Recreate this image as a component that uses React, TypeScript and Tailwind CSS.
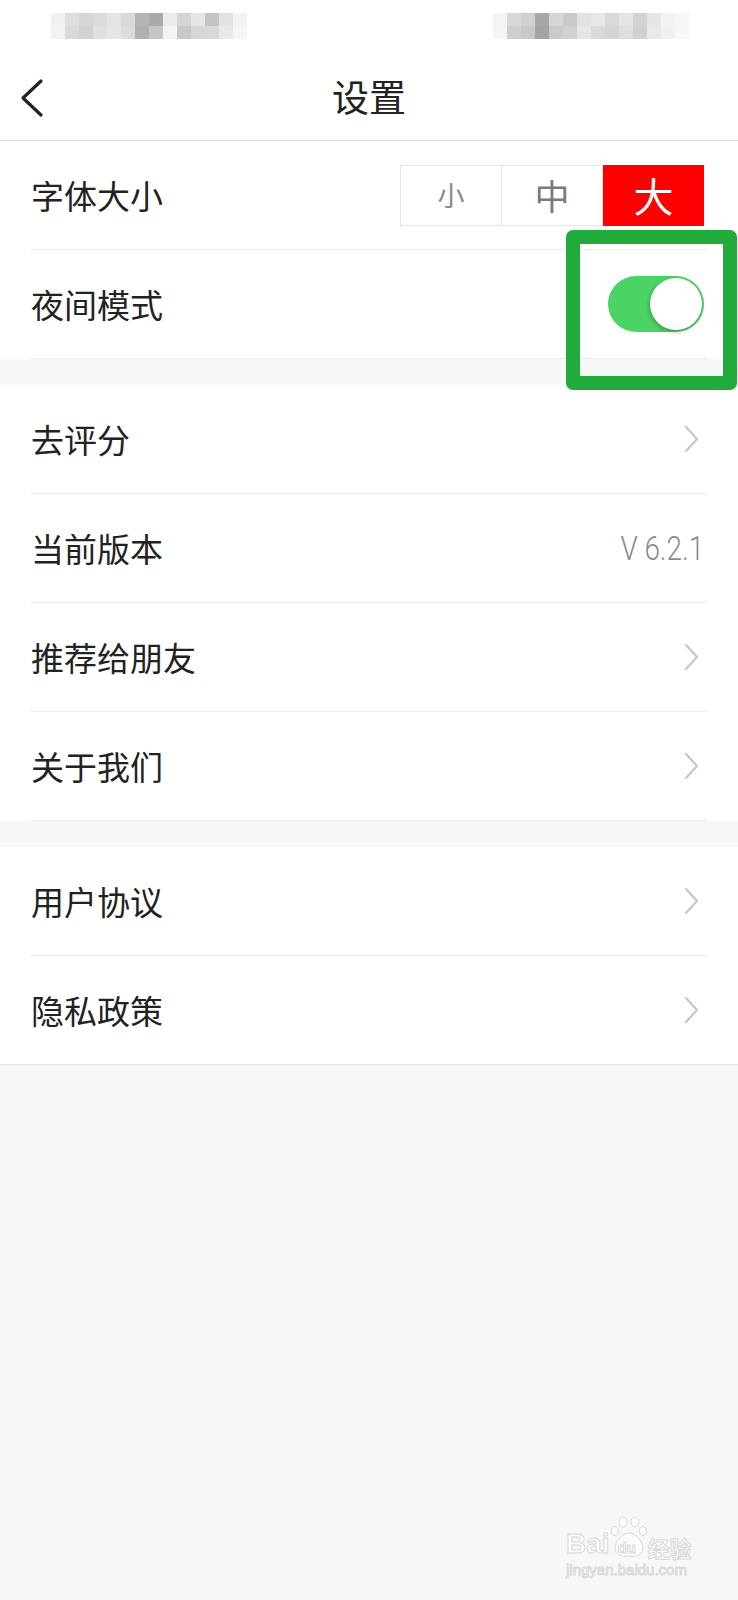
import type { ReactNode } from "react";

const leftMosaic = [
  ["#f1f1f1", "#dedede", "#d6d6d6", "#dcdcdc", "#e4e4e4", "#d9d9d9", "#b4b4b4", "#a9a9a9", "#ececec", "#d4d4d4", "#e6e6e6", "#c4c4c4", "#e2e2e2", "#f3f3f3"],
  ["#f3f3f3", "#d9d9d9", "#d2d2d2", "#e0e0e0", "#e6e6e6", "#dcdcdc", "#b0b0b0", "#c6c6c6", "#f4f4f4", "#c8c8c8", "#d6d6d6", "#d8d8d8", "#e8e8e8", "#f5f5f5"],
];

const rightMosaic = [
  ["#f4f4f4", "#d8d8d8", "#d0d0d0", "#a7a7a7", "#d6d6d6", "#c9c9c9", "#e2e2e2", "#e8e8e8", "#d9d9d9", "#e4e4e4", "#d2d2d2", "#e6e6e6", "#f2f2f2", "#f6f6f6"],
  ["#f5f5f5", "#cfcfcf", "#c8c8c8", "#a3a3a3", "#cbcbcb", "#d1d1d1", "#e6e6e6", "#dadada", "#d4d4d4", "#dedede", "#d0d0d0", "#e9e9e9", "#f0f0f0", "#f7f7f7"],
];

function Mosaic({ cells }: { cells: string[][] }) {
  return (
    <div className="flex flex-col">
      {cells.map((row, r) => (
        <div key={r} className="flex">
          {row.map((c, i) => (
            <div key={i} className="h-[13px] w-[14px]" style={{ backgroundColor: c }} />
          ))}
        </div>
      ))}
    </div>
  );
}

function Chevron() {
  return (
    <svg width="18" height="28" viewBox="0 0 18 28" fill="none" className="mr-[4px]">
      <polyline points="4,2 15,14 4,26" stroke="#c6c6c6" strokeWidth="2.2" strokeLinecap="round" strokeLinejoin="round" />
    </svg>
  );
}

// rows are 109px tall including their 1px separator (border-box)
function Row({ label, children, last = false }: { label: string; children?: ReactNode; last?: boolean }) {
  return (
    <div className={last ? "border-b border-[#e2e2e2] bg-white px-[31px]" : "bg-white px-[31px]"}>
      <div
        className={
          last
            ? "flex h-[108px] items-center justify-between"
            : "flex h-[109px] items-center justify-between border-b border-[#ececec]"
        }
      >
        <span className="text-[33px] leading-none text-[#222]">{label}</span>
        <div className="flex items-center pr-[3px]">{children}</div>
      </div>
    </div>
  );
}

function FontSizePicker() {
  return (
    <div className="flex h-[61px]">
      <div className="flex w-[102px] items-center justify-center border border-[#e6e6e6] text-[27px] text-[#8a8a8a]">小</div>
      <div className="flex w-[101px] items-center justify-center border-y border-r border-[#e6e6e6] text-[35px] text-[#7a7a7a]">中</div>
      <div className="flex w-[101px] items-center justify-center bg-[#ff0000] text-[40px] text-white">大</div>
    </div>
  );
}

function Toggle() {
  return (
    <div className="flex h-[56px] w-[96px] items-center justify-end rounded-full bg-[#4bd463] p-[2px]">
      <div className="size-[52px] rounded-full bg-white shadow-[-1px_2px_4px_rgba(0,0,0,0.25)]" />
    </div>
  );
}

function Gap() {
  return <div className="h-[26px] bg-[#f7f7f7]" />;
}

function Watermark() {
  return (
    <div className="absolute left-[566px] top-[1516px] flex flex-col items-start font-['Liberation_Sans',sans-serif] text-[#fbfbfb] [-webkit-text-stroke:1px_#d9d9d9]">
      <div className="flex items-end">
        <span className="text-[28px] font-bold leading-none">Bai</span>
        <div className="relative h-[42px] w-[38px]">
          <svg width="38" height="42" viewBox="0 0 38 42" className="absolute left-0 top-0">
            <g fill="#fbfbfb" stroke="#d9d9d9" strokeWidth="1">
              <ellipse cx="5" cy="15" rx="3.5" ry="4.5" />
              <ellipse cx="13" cy="6" rx="4" ry="5" />
              <ellipse cx="25" cy="6" rx="4" ry="5" />
              <ellipse cx="33" cy="15" rx="3.5" ry="4.5" />
              <path d="M19 17 C12 17 5 26 5 32 C5 40 13 41 19 40 C25 41 33 40 33 32 C33 26 26 17 19 17 Z" />
            </g>
          </svg>
          <span className="absolute left-[8px] top-[24px] text-[15px] font-bold leading-none">du</span>
        </div>
        <span className="font-['Noto_Sans_CJK_SC',sans-serif] text-[22px] font-bold leading-none">经验</span>
      </div>
      <span className="mt-[4px] text-[15px] leading-none">jingyan.baidu.com</span>
    </div>
  );
}

export default function App() {
  return (
    <div className="relative min-h-[1600px] w-[738px] bg-[#f7f7f7] font-['Noto_Sans_CJK_SC',sans-serif]">
      <div className="bg-white">
        <div className="flex h-[52px] items-center justify-between pl-[51px] pr-[49px]">
          <Mosaic cells={leftMosaic} />
          <Mosaic cells={rightMosaic} />
        </div>
        <div className="relative flex h-[89px] items-center justify-center border-b border-[#d9d9d9]">
          <svg width="30" height="40" viewBox="0 0 30 40" fill="none" className="absolute left-[16px] top-[26px]">
            <polyline points="25,3 7,20 25,37" stroke="#222" strokeWidth="3.2" strokeLinecap="round" strokeLinejoin="round" />
          </svg>
          <span className="text-[37px] leading-none text-[#222]">设置</span>
        </div>
      </div>

      <Row label="字体大小">
        <FontSizePicker />
      </Row>
      <Row label="夜间模式">
        <Toggle />
      </Row>

      <Gap />

      <Row label="去评分">
        <Chevron />
      </Row>
      <Row label="当前版本">
        <span className="origin-right scale-x-[0.82] font-['Roboto',sans-serif] text-[34px] font-light leading-none text-[#8a8a8a]">
          V 6.2.1
        </span>
      </Row>
      <Row label="推荐给朋友">
        <Chevron />
      </Row>
      <Row label="关于我们">
        <Chevron />
      </Row>

      <Gap />

      <Row label="用户协议">
        <Chevron />
      </Row>
      <Row label="隐私政策" last>
        <Chevron />
      </Row>

      <div className="absolute left-[566px] top-[230px] h-[160px] w-[171px] rounded-[7px] border-[14px] border-[#22aa3b]" />

      <Watermark />
    </div>
  );
}
